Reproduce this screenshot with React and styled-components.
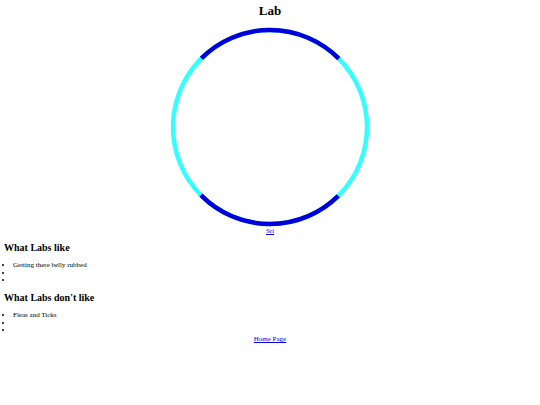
import React from 'react'
import styled, {createGlobalStyle} from 'styled-components'

const GlobalStyle = createGlobalStyle`
body{
margin:0;
background:#fff;
color:#000;
font-family:"Liberation Serif","Times New Roman",serif;
}
`

const Page = styled.div`
padding:0 4px;
`

const Title = styled.h1`
font-size:13px;
font-weight:bold;
text-align:center;
margin:3px 0 7px;
`

const Portrait = styled.div`
display:flex;
flex-direction:column;
align-items:center;
`

const Ring = styled.svg`
display:block;
width:202px;
height:202px;
`

const SmallLink = styled.a`
font-size:7px;
color:#0000ee;
text-decoration:underline;
line-height:7px;
`

const Heading = styled.h2`
font-size:10px;
font-weight:bold;
margin:7px 0 9px;
`

const List = styled.ul`
margin:0;
padding-left:9px;
font-size:7px;
line-height:7.7px;
`

const Item = styled.li`
height:7.7px;
`

const Footer = styled.div`
text-align:center;
font-size:7px;
line-height:8px;
`

const likes = ['Getting there belly rubbed', '', '']
const dislikes = ['Fleas and Ticks', '', '']

const circumference = 2 * Math.PI * 97

const App = () => {
    const quarter = circumference / 4
    return (
        <Page>
            <GlobalStyle/>
            <Title>Lab</Title>
            <Portrait>
                <Ring viewBox="0 0 202 202">
                    <circle cx="101" cy="101" r="97" fill="none" stroke="#33ffff" strokeWidth="4.5"/>
                    <circle cx="101" cy="101" r="97" fill="none" stroke="#0000dd" strokeWidth="4.5"
                        strokeDasharray={`${quarter} ${quarter}`}
                        transform="rotate(-135 101 101)"/>
                </Ring>
                <SmallLink href="#">Sri</SmallLink>
            </Portrait>
            <Heading>What Labs like</Heading>
            <List>
                {likes.map((t, i) => <Item key={i}>{t}</Item>)}
            </List>
            <Heading>What Labs don't like</Heading>
            <List>
                {dislikes.map((t, i) => <Item key={i}>{t}</Item>)}
            </List>
            <Footer><SmallLink href="#">Home Page</SmallLink></Footer>
        </Page>
    )
}

export default App
